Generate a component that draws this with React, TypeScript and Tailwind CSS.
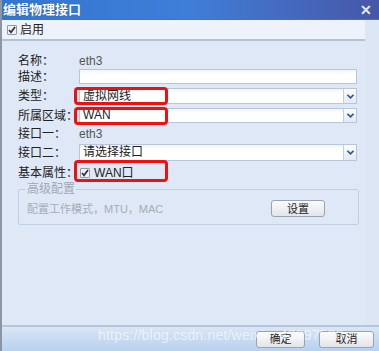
import React from 'react';

const font = { fontFamily: '"Liberation Sans", "Noto Sans CJK SC", sans-serif' };

function Arrow() {
  return (
    <div className="w-[13px] h-full border-l border-[#c3cfdf] bg-gradient-to-b from-[#fbfcfe] to-[#e3eaf4] flex items-center justify-center">
      <svg width="7" height="5" viewBox="0 0 7 5">
        <path d="M0.5 0.8 L3.5 3.8 L6.5 0.8" fill="none" stroke="#2e5596" strokeWidth="1.6" />
      </svg>
    </div>
  );
}

function Field({ value, select, h = 16 }: { value?: string; select?: boolean; h?: number }) {
  return (
    <div
      className="w-[278px] flex items-stretch border border-[#b9c6d8] bg-gradient-to-b from-[#f2f4f7] to-white to-[30%]"
      style={{ height: h }}
    >
      <div className="flex-1 pl-[3px] flex items-center text-[12px] leading-[13px] text-[#222]">{value}</div>
      {select && <Arrow />}
    </div>
  );
}

function Row({ label, children, className = '' }: { label: string; children: React.ReactNode; className?: string }) {
  return (
    <div className={`flex items-center ${className}`}>
      <div className="w-[61px] text-[12px] leading-[14px] text-[#222]">{label}</div>
      {children}
    </div>
  );
}

function Check() {
  return (
    <div className="w-[10px] h-[10px] rounded-[1px] border border-[#8e9aab] bg-[#eef1f5] flex items-center justify-center">
      <svg width="8" height="8" viewBox="0 0 8 8">
        <path d="M1 4 L3 6.3 L7 1" fill="none" stroke="#333" strokeWidth="1.7" />
      </svg>
    </div>
  );
}

function Btn({ label, w }: { label: string; w: number }) {
  return (
    <div
      className="h-[17px] rounded-[3px] border border-[#9aa4b1] bg-gradient-to-b from-[#fbfbfb] to-[#e2e5ea] flex items-center justify-center text-[11px] leading-[12px] text-[#222]"
      style={{ width: w }}
    >
      {label}
    </div>
  );
}

export default function App() {
  return (
    <div className="relative w-[379px] h-[351px] bg-[#dfe8f6] overflow-hidden flex flex-col border-l-2 border-[#8b95a4] leading-[14px]" style={font}>
      {/* title */}
      <div className="h-[20px] shrink-0 flex items-center justify-between bg-gradient-to-r from-[#3276cf] via-[#3f7ed8] to-[#4657a8] border-b border-[#56709d]">
        <span className="pl-[1px] text-[13px] leading-[16px] font-bold text-white [text-shadow:0_0_1px_#1c3f80]">编辑物理接口</span>
        <span className="pr-[7px] text-[14px] leading-[16px] font-bold text-[#e2e8f5]">✕</span>
      </div>
      {/* toolbar */}
      <div className="h-[21px] shrink-0 w-[363px] flex items-center gap-[3px] pl-[5px] bg-[#edf2fb] border-b-2 border-[#b0c2d6]">
        <Check />
        <span className="text-[12px] text-[#222]">启用</span>
      </div>
      {/* form */}
      <div className="flex-1 pl-[16px] pt-[13px] flex flex-col">
        <Row label="名称：" className="h-[14px]">
          <span className="text-[12px] text-[#555]">eth3</span>
        </Row>
        <Row label="描述：" className="mt-[1px]">
          <Field h={15} />
        </Row>
        <Row label="类型：" className="mt-[4px]">
          <Field value="虚拟网线" select h={16} />
        </Row>
        <Row label="所属区域：" className="mt-[4px]">
          <Field value="WAN" select h={15} />
        </Row>
        <Row label="接口一：" className="mt-[3px] h-[16px]">
          <span className="text-[12px] text-[#555]">eth3</span>
        </Row>
        <Row label="接口二：" className="mt-[2px]">
          <Field value="请选择接口" select h={17} />
        </Row>
        <Row label="基本属性：" className="mt-[3px] h-[18px]">
          <div className="flex items-center gap-[4px] pl-[1px]">
            <Check />
            <span className="text-[12px] text-[#222]">WAN口</span>
          </div>
        </Row>
        <fieldset className="mt-[1px] w-[341px] h-[42px] border border-[#c1cfe0] rounded-[2px] px-[8px]">
          <legend className="px-[1px] ml-[-1px] text-[12px] leading-[12px] text-[#a0a8b4]">高级配置</legend>
          <div className="mt-[5px] flex items-center justify-between pr-[25px]">
            <span className="text-[11px] text-[#a5adb8]">配置工作模式，MTU，MAC</span>
            <Btn label="设置" w={54} />
          </div>
        </fieldset>
      </div>
      {/* footer */}
      <div className="h-[26px] shrink-0 border-t-2 border-[#b5c6db] bg-gradient-to-b from-[#d9e6f6] to-[#b9d0ee] flex items-center justify-end gap-[14px] pr-[5px]">
        <Btn label="确定" w={49} />
        <Btn label="取消" w={55} />
      </div>
      {/* right strip */}
      <div className="absolute right-0 top-[21px] bottom-[26px] w-[14px] bg-[#dce6f4]" />
      {/* annotations */}
      <div className="absolute left-[72px] top-[87px] w-[94px] h-[18px] border-[3px] border-[#ee1111] rounded-[4px]" />
      <div className="absolute left-[72px] top-[107px] w-[94px] h-[18px] border-[3px] border-[#ee1111] rounded-[4px]" />
      <div className="absolute left-[72px] top-[160px] w-[94px] h-[22px] border-[3px] border-[#ee1111] rounded-[4px]" />
      {/* watermark */}
      <div className="absolute left-[96px] top-[327px] text-[14px] leading-[16px] text-white/60 tracking-[0.2px] pointer-events-none">https://blog.csdn.net/weixin_43997530</div>
    </div>
  );
}
